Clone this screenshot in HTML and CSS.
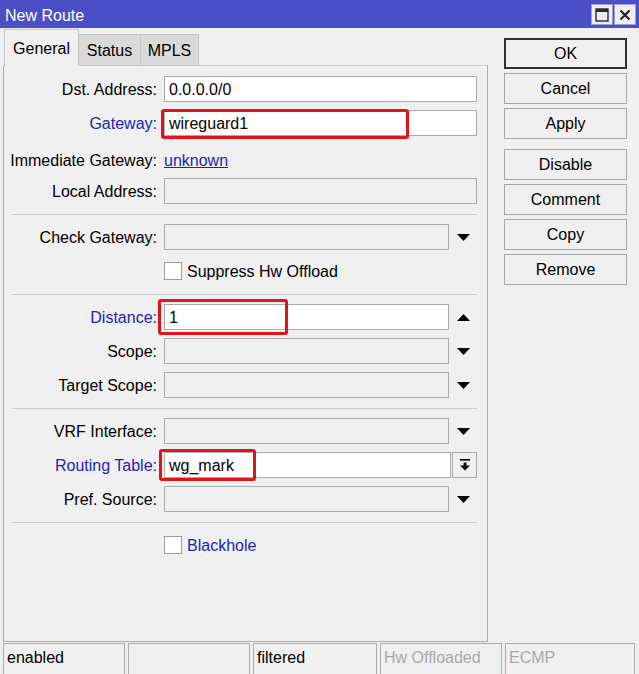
FILE: index.html
```html
<!DOCTYPE html>
<html>
<head>
<meta charset="utf-8">
<title>New Route</title>
<link rel="stylesheet" href="styles.css">
</head>
<body>
<div class="window">
  <div class="titlebar">
    <span class="title">New Route</span>
    <div class="wbtns">
      <span class="wbtn"><svg width="14" height="14" viewBox="0 0 14 14"><rect x="1" y="1" width="12" height="12" fill="none" stroke="#2a2a2a" stroke-width="1.4"/><rect x="1" y="1" width="12" height="3" fill="#2a2a2a"/></svg></span>
      <span class="wbtn"><svg width="12" height="12" viewBox="0 0 12 12"><path d="M1.5 1.5L10.5 10.5M10.5 1.5L1.5 10.5" stroke="#222" stroke-width="2.2"/></svg></span>
    </div>
  </div>
  <div class="main">
    <div class="left">
      <div class="tabs">
        <div class="tab active t-general">General</div>
        <div class="tab t-status">Status</div>
        <div class="tab t-mpls">MPLS</div>
      </div>
      <div class="panel">
        <div class="section">
          <div class="row">
            <span class="lbl">Dst. Address:</span>
            <div class="cell"><div class="input white wide">0.0.0.0/0</div></div>
          </div>
          <div class="row">
            <span class="lbl blue">Gateway:</span>
            <div class="cell"><div class="input white wide">wireguard1</div><span class="hl hl-gw"></span></div>
          </div>
          <div class="row textrow">
            <span class="lbl">Immediate Gateway:</span>
            <div class="cell"><span class="link">unknown</span></div>
          </div>
          <div class="row">
            <span class="lbl">Local Address:</span>
            <div class="cell"><div class="input wide"></div></div>
          </div>
        </div>
        <div class="sep"></div>
        <div class="section">
          <div class="row">
            <span class="lbl">Check Gateway:</span>
            <div class="cell combo"><div class="input"></div><span class="arrow"><svg width="13" height="7" viewBox="0 0 13 7"><path d="M0 0H13L6.5 7Z"/></svg></span></div>
          </div>
          <div class="row">
            <span class="lbl"></span>
            <div class="cell check"><span class="cb"></span><span class="cbtext">Suppress Hw Offload</span></div>
          </div>
        </div>
        <div class="sep"></div>
        <div class="section">
          <div class="row">
            <span class="lbl blue">Distance:</span>
            <div class="cell combo"><div class="input white">1</div><span class="arrow"><svg width="13" height="7" viewBox="0 0 13 7"><path d="M0 7H13L6.5 0Z"/></svg></span><span class="hl hl-dist"></span></div>
          </div>
          <div class="row">
            <span class="lbl">Scope:</span>
            <div class="cell combo"><div class="input"></div><span class="arrow"><svg width="13" height="7" viewBox="0 0 13 7"><path d="M0 0H13L6.5 7Z"/></svg></span></div>
          </div>
          <div class="row">
            <span class="lbl">Target Scope:</span>
            <div class="cell combo"><div class="input"></div><span class="arrow"><svg width="13" height="7" viewBox="0 0 13 7"><path d="M0 0H13L6.5 7Z"/></svg></span></div>
          </div>
        </div>
        <div class="sep"></div>
        <div class="section">
          <div class="row">
            <span class="lbl">VRF Interface:</span>
            <div class="cell combo"><div class="input"></div><span class="arrow"><svg width="13" height="7" viewBox="0 0 13 7"><path d="M0 0H13L6.5 7Z"/></svg></span></div>
          </div>
          <div class="row">
            <span class="lbl blue">Routing Table:</span>
            <div class="cell combo"><div class="input white rt">wg_mark</div><span class="rtbtn"><svg width="12" height="14" viewBox="0 0 12 14"><rect x="1" y="1" width="10" height="1.6"/><rect x="4.6" y="4.5" width="2.8" height="3.5"/><path d="M1 7.5H11L6 12.5Z"/></svg></span><span class="hl hl-rt"></span></div>
          </div>
          <div class="row">
            <span class="lbl">Pref. Source:</span>
            <div class="cell combo"><div class="input"></div><span class="arrow"><svg width="13" height="7" viewBox="0 0 13 7"><path d="M0 0H13L6.5 7Z"/></svg></span></div>
          </div>
        </div>
        <div class="sep"></div>
        <div class="section">
          <div class="row">
            <span class="lbl"></span>
            <div class="cell check"><span class="cb"></span><span class="cbtext blue">Blackhole</span></div>
          </div>
        </div>
      </div>
    </div>
    <div class="buttons">
      <div class="btn default">OK</div>
      <div class="btn">Cancel</div>
      <div class="btn">Apply</div>
      <div class="btn group">Disable</div>
      <div class="btn">Comment</div>
      <div class="btn">Copy</div>
      <div class="btn">Remove</div>
    </div>
  </div>
  <div class="status">
    <div class="scell w1">enabled</div>
    <div class="scell w1"></div>
    <div class="scell w3">filtered</div>
    <div class="scell w1 dim">Hw Offloaded</div>
    <div class="scell w5 dim">ECMP</div>
  </div>
</div>
</body>
</html>
```
FILE: styles.css
```css
html, body {
  margin: 0;
  padding: 0;
  background: #f0f0f0;
}
body {
  font-family: "Liberation Sans", Arial, sans-serif;
  font-size: 16px;
  color: #000;
}
.window {
  width: 639px;
  height: 674px;
  overflow: hidden;
  display: flex;
  flex-direction: column;
}
.titlebar {
  flex: none;
  height: 28px;
  background: #4a4fc7;
  display: flex;
  justify-content: space-between;
  align-items: center;
  padding: 0 3px 0 5px;
  box-sizing: border-box;
}
.title {
  color: #fff;
  padding-top: 3px;
}
.wbtns {
  display: flex;
  gap: 1px;
  align-self: flex-start;
  margin-top: 4px;
}
.wbtn {
  width: 22px;
  height: 21px;
  box-sizing: border-box;
  background: #eeeef2;
  border: 1px solid #9c9fd8;
  display: flex;
  align-items: center;
  justify-content: center;
}
.main {
  flex: none;
  height: 614px;
  padding-top: 1px;
  box-sizing: border-box;
  display: flex;
}
.left {
  margin-left: 3px;
  width: 485px;
  display: flex;
  flex-direction: column;
}
.tabs {
  height: 36px;
  display: flex;
  align-items: flex-end;
  padding-left: 1px;
}
.tab {
  height: 31px;
  box-sizing: border-box;
  border: 1px solid #c6c6c6;
  border-bottom: none;
  background: #dadada;
  display: flex;
  align-items: center;
  justify-content: center;
  padding-top: 2px;
}
.tab.active {
  height: 37px;
  margin-bottom: -1px;
  background: #f0f0f0;
  position: relative;
  z-index: 1;
}
.t-general { width: 75px; }
.t-status { width: 62px; border-left: none; }
.t-mpls { width: 58px; border-left: none; }
.panel {
  height: 577px;
  box-sizing: border-box;
  border: 1px solid #acacac;
  border-top-color: #c8c8c8;
  padding-top: 10px;
}
.section {
  display: flex;
  flex-direction: column;
  gap: 8px;
}
.sep {
  height: 1px;
  background: #cbcbcb;
  margin: 10px 10px 9px 8px;
}
.row {
  display: grid;
  grid-template-columns: 153px 313px;
  column-gap: 7px;
  height: 26px;
  align-items: center;
}
.lbl {
  text-align: right;
  white-space: nowrap;
  padding-top: 2px;
}
.textrow .lbl,
.textrow .cell {
  padding-top: 8px;
  box-sizing: border-box;
}
.blue {
  color: #2323b2;
}
.cell {
  position: relative;
  height: 26px;
  display: flex;
  align-items: center;
}
.input {
  height: 26px;
  box-sizing: border-box;
  border: 1px solid #ababab;
  background: #f0f0f0;
  padding: 1px 0 0 4px;
  line-height: 24px;
  white-space: nowrap;
}
.input.white {
  background: #fff;
}
.input.wide {
  width: 313px;
}
.combo .input {
  width: 285px;
}
.combo .input.rt {
  width: 287px;
}
.arrow {
  width: 28px;
  display: flex;
  justify-content: center;
}
.rtbtn {
  width: 25px;
  height: 26px;
  margin-left: 1px;
  box-sizing: border-box;
  border: 1px solid #ababab;
  display: flex;
  align-items: center;
  justify-content: center;
}
.link {
  color: #1f1fb6;
  text-decoration: underline;
}
.check .cb {
  width: 18px;
  height: 18px;
  box-sizing: border-box;
  border: 1px solid #9c9c9c;
  background: #fff;
}
.cbtext {
  margin-left: 5px;
  padding-top: 2px;
}
.hl {
  position: absolute;
  border: 3px solid #e3131b;
  border-radius: 3px;
  box-sizing: border-box;
  pointer-events: none;
}
.hl-gw {
  left: -3px;
  top: -1px;
  width: 248px;
  height: 30px;
}
.hl-dist {
  left: -6px;
  top: -5px;
  width: 130px;
  height: 36px;
}
.hl-rt {
  left: -5px;
  top: -3px;
  width: 97px;
  height: 32px;
}
.buttons {
  margin-left: 16px;
  margin-top: 9px;
  width: 123px;
  display: flex;
  flex-direction: column;
  gap: 4px;
}
.btn {
  height: 31px;
  box-sizing: border-box;
  border: 1px solid #a6a6a6;
  background: #f0f0f0;
  display: flex;
  align-items: center;
  justify-content: center;
  padding-top: 1px;
}
.btn.default {
  border: 2px solid #303030;
}
.btn.group {
  margin-top: 6px;
}
.status {
  flex: none;
  margin-top: 1px;
  height: 31px;
  display: flex;
  gap: 3px;
  padding-left: 3px;
}
.scell {
  box-sizing: border-box;
  border: 1px solid #acacac;
  border-bottom: none;
  padding-left: 3px;
  line-height: 28px;
  white-space: nowrap;
  overflow: hidden;
}
.w1 { width: 122px; }
.w3 { width: 124px; }
.w5 { width: 130px; }
.scell.dim {
  color: #a9a9a9;
}
```
